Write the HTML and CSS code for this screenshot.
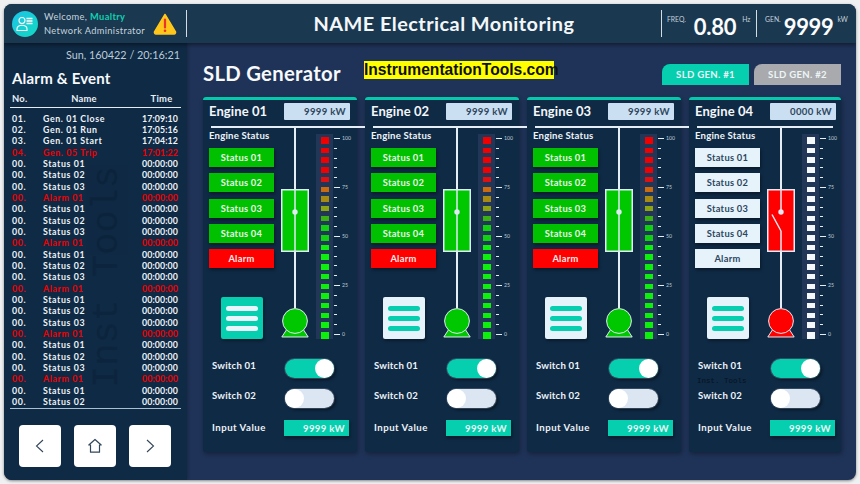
FILE: index.html
```html
<!DOCTYPE html>
<html lang="en">
<head>
<meta charset="utf-8">
<title>NAME Electrical Monitoring</title>
<link rel="stylesheet" href="styles.css">
</head>
<body>
<div class="app">
  <header class="top">
    <div class="user">
      <div class="avatar">
        <svg viewBox="0 0 26 26" width="26" height="26"><circle cx="10" cy="9.5" r="3" fill="none" stroke="#fff" stroke-width="1.1"/><path d="M5 19.5v-1.8c0-2.2 2-3.4 5-3.4s5 1.2 5 3.4v1.8z" fill="none" stroke="#fff" stroke-width="1.1"/><path d="M14.5 7.5h6M14.5 10h6M14.5 12.5h6" stroke="#fff" stroke-width="1.3"/></svg>
      </div>
      <div class="user-text">
        <div>Welcome, <b class="user-name">Mualtry</b></div>
        <div>Network Administrator</div>
      </div>
    </div>
    <svg class="warn" viewBox="0 0 24 22" width="24" height="22"><path d="M12 1.5 1.5 19a1.6 1.6 0 0 0 1.4 2h18.2a1.6 1.6 0 0 0 1.4-2z" fill="#ffc61b" stroke="#ffc61b" stroke-width="1.5" stroke-linejoin="round"/><path d="M12 6.5v8" stroke="#e8342a" stroke-width="2.2" stroke-linecap="round"/><circle cx="12" cy="17.7" r="1.3" fill="#e8342a"/></svg>
    <h1 class="title">NAME Electrical Monitoring</h1>
    <div class="meter meter-freq">
      <span class="m-label">FREQ.</span><span class="m-value">0.80</span><span class="m-unit">Hz</span>
    </div>
    <div class="meter meter-gen">
      <span class="m-label">GEN.</span><span class="m-value">9999</span><span class="m-unit">kW</span>
    </div>
  </header>

  <div class="content">
    <aside class="side">
      <div class="stamp">Sun, 160422 / 20:16:21</div>
      <h2 class="side-title">Alarm &amp; Event</h2>
      <div class="ev-head"><span>No.</span><span>Name</span><span>Time</span></div>
      <div class="ev-list">
        <div class="ev"><span>01.</span><span>Gen. 01 Close</span><span>17:09:10</span></div>
        <div class="ev"><span>02.</span><span>Gen. 01 Run</span><span>17:05:16</span></div>
        <div class="ev"><span>03.</span><span>Gen. 01 Start</span><span>17:04:12</span></div>
        <div class="ev ev-red"><span>04.</span><span>Gen. 05 Trip</span><span>17:01:22</span></div>
        <div class="ev"><span>00.</span><span>Status 01</span><span>00:00:00</span></div>
        <div class="ev"><span>00.</span><span>Status 02</span><span>00:00:00</span></div>
        <div class="ev"><span>00.</span><span>Status 03</span><span>00:00:00</span></div>
        <div class="ev ev-red"><span>00.</span><span>Alarm 01</span><span>00:00:00</span></div>
        <div class="ev"><span>00.</span><span>Status 01</span><span>00:00:00</span></div>
        <div class="ev"><span>00.</span><span>Status 02</span><span>00:00:00</span></div>
        <div class="ev"><span>00.</span><span>Status 03</span><span>00:00:00</span></div>
        <div class="ev ev-red"><span>00.</span><span>Alarm 01</span><span>00:00:00</span></div>
        <div class="ev"><span>00.</span><span>Status 01</span><span>00:00:00</span></div>
        <div class="ev"><span>00.</span><span>Status 02</span><span>00:00:00</span></div>
        <div class="ev"><span>00.</span><span>Status 03</span><span>00:00:00</span></div>
        <div class="ev ev-red"><span>00.</span><span>Alarm 01</span><span>00:00:00</span></div>
        <div class="ev"><span>00.</span><span>Status 01</span><span>00:00:00</span></div>
        <div class="ev"><span>00.</span><span>Status 02</span><span>00:00:00</span></div>
        <div class="ev"><span>00.</span><span>Status 03</span><span>00:00:00</span></div>
        <div class="ev ev-red"><span>00.</span><span>Alarm 01</span><span>00:00:00</span></div>
        <div class="ev"><span>00.</span><span>Status 01</span><span>00:00:00</span></div>
        <div class="ev"><span>00.</span><span>Status 02</span><span>00:00:00</span></div>
        <div class="ev"><span>00.</span><span>Status 03</span><span>00:00:00</span></div>
        <div class="ev ev-red"><span>00.</span><span>Alarm 01</span><span>00:00:00</span></div>
        <div class="ev"><span>00.</span><span>Status 01</span><span>00:00:00</span></div>
        <div class="ev"><span>00.</span><span>Status 02</span><span>00:00:00</span></div>
      </div>
      <div class="nav">
        <button class="nav-btn" aria-label="Back"><svg viewBox="0 0 14 14" width="14" height="14"><path d="M10 1 3.5 7l6.5 6" fill="none" stroke="#33475b" stroke-width="1.1"/></svg></button>
        <button class="nav-btn" aria-label="Home"><svg viewBox="0 0 16 16" width="16" height="16"><path d="M8 1.5 1.8 7l1.7 0v7.2h9V7l1.7 0z" fill="none" stroke="#33475b" stroke-width="1.2" stroke-linejoin="round"/></svg></button>
        <button class="nav-btn" aria-label="Next"><svg viewBox="0 0 14 14" width="14" height="14"><path d="M4 1l6.5 6L4 13" fill="none" stroke="#33475b" stroke-width="1.1"/></svg></button>
      </div>
      <div class="ghost">Inst Tools</div>
    </aside>

    <main class="main">
      <div class="main-head">
        <h2 class="main-title">SLD Generator</h2>
        <div class="brand">InstrumentationTools.com</div>
        <div class="tabs">
          <div class="tab tab-on">SLD GEN. #1</div>
          <div class="tab tab-off">SLD GEN. #2</div>
        </div>
      </div>

      <div class="engines">
        <section class="card">
          <div class="card-head"><span class="card-name">Engine 01</span><span class="card-val">9999 kW</span></div>
          <div class="bus"></div>
          <div class="card-mid">
            <div class="stat-col">
              <div class="stat-label">Engine Status</div>
              <div class="st st-g">Status 01</div>
              <div class="st st-g">Status 02</div>
              <div class="st st-g">Status 03</div>
              <div class="st st-g">Status 04</div>
              <div class="st st-r">Alarm</div>
              <div class="menu menu-teal"><i></i><i></i><i></i></div>
            </div>
            <div class="sld">
              <div class="wire"></div>
              <svg class="sw" viewBox="0 0 28 63" width="28" height="63"><rect x=".75" y=".75" width="26.5" height="61.5" fill="#00c800" stroke="#dfeaf5" stroke-width="1.5"/><path d="M14 0v63" stroke="#dfeaf5" stroke-width="1.5"/><circle cx="14" cy="23" r="2.7" fill="#dfeaf5"/></svg>
              <div class="wire wire-fill"></div>
              <svg class="pump" viewBox="0 0 28 30" width="28" height="30"><path d="M6 21 .8 29h26.4L22 21z" fill="#00c800" stroke="#dfeaf5"/><circle cx="14" cy="13" r="12.4" fill="#00c800" stroke="#dfeaf5" stroke-width="1"/></svg>
            </div>
            <div class="gauge">
              <div class="seg-col"><i class="s-big s-r"></i><i class="s-r"></i><i class="s-r"></i><i class="s-r"></i><i class="s-r2"></i><i class="s-o1"></i><i class="s-o2"></i><i class="s-o3"></i><i class="s-g0"></i><i class="s-g1"></i><i class="s-g1"></i><i class="s-g"></i><i class="s-g"></i><i class="s-g"></i><i class="s-g"></i><i class="s-g"></i><i class="s-g"></i><i class="s-g"></i><i class="s-g"></i><i class="s-g"></i><i class="s-big s-g"></i></div>
              <div class="scale"><span>100</span><span>75</span><span>50</span><span>25</span><span>0</span></div>
            </div>
          </div>
          <div class="row row-1"><span class="row-label">Switch 01</span><span class="tog tog-on"><i></i></span></div>
          <div class="row row-2"><span class="row-label">Switch 02</span><span class="tog"><i></i></span></div>
          <div class="row row-3"><span class="row-label">Input Value</span><span class="input">9999 kW</span></div>
        </section>

        <section class="card">
          <div class="card-head"><span class="card-name">Engine 02</span><span class="card-val">9999 kW</span></div>
          <div class="bus"></div>
          <div class="card-mid">
            <div class="stat-col">
              <div class="stat-label">Engine Status</div>
              <div class="st st-g">Status 01</div>
              <div class="st st-g">Status 02</div>
              <div class="st st-g">Status 03</div>
              <div class="st st-g">Status 04</div>
              <div class="st st-r">Alarm</div>
              <div class="menu"><i></i><i></i><i></i></div>
            </div>
            <div class="sld">
              <div class="wire"></div>
              <svg class="sw" viewBox="0 0 28 63" width="28" height="63"><rect x=".75" y=".75" width="26.5" height="61.5" fill="#00c800" stroke="#dfeaf5" stroke-width="1.5"/><path d="M14 0v63" stroke="#dfeaf5" stroke-width="1.5"/><circle cx="14" cy="23" r="2.7" fill="#dfeaf5"/></svg>
              <div class="wire wire-fill"></div>
              <svg class="pump" viewBox="0 0 28 30" width="28" height="30"><path d="M6 21 .8 29h26.4L22 21z" fill="#00c800" stroke="#dfeaf5"/><circle cx="14" cy="13" r="12.4" fill="#00c800" stroke="#dfeaf5" stroke-width="1"/></svg>
            </div>
            <div class="gauge">
              <div class="seg-col"><i class="s-big s-r"></i><i class="s-r"></i><i class="s-r"></i><i class="s-r"></i><i class="s-r2"></i><i class="s-o1"></i><i class="s-o2"></i><i class="s-o3"></i><i class="s-g0"></i><i class="s-g1"></i><i class="s-g1"></i><i class="s-g"></i><i class="s-g"></i><i class="s-g"></i><i class="s-g"></i><i class="s-g"></i><i class="s-g"></i><i class="s-g"></i><i class="s-g"></i><i class="s-g"></i><i class="s-big s-g"></i></div>
              <div class="scale"><span>100</span><span>75</span><span>50</span><span>25</span><span>0</span></div>
            </div>
          </div>
          <div class="row row-1"><span class="row-label">Switch 01</span><span class="tog tog-on"><i></i></span></div>
          <div class="row row-2"><span class="row-label">Switch 02</span><span class="tog"><i></i></span></div>
          <div class="row row-3"><span class="row-label">Input Value</span><span class="input">9999 kW</span></div>
        </section>

        <section class="card">
          <div class="card-head"><span class="card-name">Engine 03</span><span class="card-val">9999 kW</span></div>
          <div class="bus"></div>
          <div class="card-mid">
            <div class="stat-col">
              <div class="stat-label">Engine Status</div>
              <div class="st st-g">Status 01</div>
              <div class="st st-g">Status 02</div>
              <div class="st st-g">Status 03</div>
              <div class="st st-g">Status 04</div>
              <div class="st st-r">Alarm</div>
              <div class="menu"><i></i><i></i><i></i></div>
            </div>
            <div class="sld">
              <div class="wire"></div>
              <svg class="sw" viewBox="0 0 28 63" width="28" height="63"><rect x=".75" y=".75" width="26.5" height="61.5" fill="#00c800" stroke="#dfeaf5" stroke-width="1.5"/><path d="M14 0v63" stroke="#dfeaf5" stroke-width="1.5"/><circle cx="14" cy="23" r="2.7" fill="#dfeaf5"/></svg>
              <div class="wire wire-fill"></div>
              <svg class="pump" viewBox="0 0 28 30" width="28" height="30"><path d="M6 21 .8 29h26.4L22 21z" fill="#00c800" stroke="#dfeaf5"/><circle cx="14" cy="13" r="12.4" fill="#00c800" stroke="#dfeaf5" stroke-width="1"/></svg>
            </div>
            <div class="gauge">
              <div class="seg-col"><i class="s-big s-r"></i><i class="s-r"></i><i class="s-r"></i><i class="s-r"></i><i class="s-r2"></i><i class="s-o1"></i><i class="s-o2"></i><i class="s-o3"></i><i class="s-g0"></i><i class="s-g1"></i><i class="s-g1"></i><i class="s-g"></i><i class="s-g"></i><i class="s-g"></i><i class="s-g"></i><i class="s-g"></i><i class="s-g"></i><i class="s-g"></i><i class="s-g"></i><i class="s-g"></i><i class="s-big s-g"></i></div>
              <div class="scale"><span>100</span><span>75</span><span>50</span><span>25</span><span>0</span></div>
            </div>
          </div>
          <div class="row row-1"><span class="row-label">Switch 01</span><span class="tog tog-on"><i></i></span></div>
          <div class="row row-2"><span class="row-label">Switch 02</span><span class="tog"><i></i></span></div>
          <div class="row row-3"><span class="row-label">Input Value</span><span class="input">9999 kW</span></div>
        </section>

        <section class="card card-last">
          <div class="card-head"><span class="card-name">Engine 04</span><span class="card-val">0000 kW</span></div>
          <div class="bus"></div>
          <div class="card-mid">
            <div class="stat-col">
              <div class="stat-label">Engine Status</div>
              <div class="st st-w">Status 01</div>
              <div class="st st-w">Status 02</div>
              <div class="st st-w">Status 03</div>
              <div class="st st-w">Status 04</div>
              <div class="st st-w">Alarm</div>
              <div class="menu"><i></i><i></i><i></i></div>
            </div>
            <div class="sld">
              <div class="wire"></div>
              <svg class="sw" viewBox="0 0 28 63" width="28" height="63"><rect x=".75" y=".75" width="26.5" height="61.5" fill="#ff0000" stroke="#dfeaf5" stroke-width="1.5"/><path d="M14 0v23M5 25.5 14 42M14 42v21" fill="none" stroke="#dfeaf5" stroke-width="1.5"/><circle cx="14" cy="23" r="2.7" fill="#dfeaf5"/></svg>
              <div class="wire wire-fill"></div>
              <svg class="pump" viewBox="0 0 28 30" width="28" height="30"><path d="M6 21 .8 29h26.4L22 21z" fill="#ff0000" stroke="#dfeaf5"/><circle cx="14" cy="13" r="12.4" fill="#ff0000" stroke="#dfeaf5" stroke-width="1"/></svg>
            </div>
            <div class="gauge">
              <div class="seg-col seg-white"><i class="s-big"></i><i></i><i></i><i></i><i></i><i></i><i></i><i></i><i></i><i></i><i></i><i></i><i></i><i></i><i></i><i></i><i></i><i></i><i></i><i></i><i class="s-big"></i></div>
              <div class="scale"><span>100</span><span>75</span><span>50</span><span>25</span><span>0</span></div>
            </div>
          </div>
          <div class="row row-1"><span class="row-label">Switch 01</span><span class="tog tog-on"><i></i></span></div>
          <div class="row row-2"><span class="row-label">Switch 02</span><span class="tog"><i></i></span></div>
          <div class="row row-3"><span class="row-label">Input Value</span><span class="input">9999 kW</span></div>
          <div class="mini-mark">Inst. Tools</div>
        </section>
      </div>
    </main>
  </div>
</div>
</body>
</html>
```

FILE: styles.css
```css
* { box-sizing: border-box; }
html, body { margin: 0; height: 100%; }
body { background: #eef0f2; font-family: Lato, "Open Sans", sans-serif; color: #fff; overflow: hidden; }
h1, h2 { margin: 0; }

.app {
  margin: 4px; width: 852px; height: 476px; border-radius: 8px; overflow: hidden;
  background: #1f3358; display: flex; flex-direction: column;
  box-shadow: 0 1px 3px rgba(0,0,0,.45);
}

/* header */
.top {
  height: 39px; flex: none; background: #1a3850; display: flex; align-items: center;
  box-shadow: 0 2px 4px rgba(0,0,0,.45); position: relative; z-index: 2;
}
.user { display: flex; align-items: center; margin-left: 8px; width: 141px; }
.avatar {
  width: 26px; height: 26px; border-radius: 50%; flex: none;
  background: linear-gradient(135deg, #1dc4e8, #12d8c0);
}
.avatar svg { display: block; }
.user-text { margin-left: 6px; font-size: 9.3px; line-height: 13.5px; color: #c6d3dd; letter-spacing: .35px; white-space: nowrap; }
.user-name { color: #10d0b0; }
.warn { flex: none; display: block; }
.title {
  flex: none; width: 476px; height: 27px; margin-left: 9px; padding-left: 40px;
  border-left: 1px solid #d5dde3; border-right: 1px solid #d5dde3;
  font-size: 19.9px; line-height: 27px; font-weight: 700; text-align: center; letter-spacing: .45px; color: #f4f7f9;
}
.meter { display: flex; height: 27px; flex: none; }
.meter-freq { width: 95px; border-right: 1px solid #d5dde3; padding-left: 5px; }
.meter-gen { width: 97px; padding-left: 8px; }
.m-label, .m-unit { font-size: 6.8px; color: #c6d3dd; line-height: 10px; padding-top: 4px; }
.m-value { font-weight: 700; font-size: 22px; line-height: 33px; color: #fafcfd; letter-spacing: -.3px; }
.meter-freq .m-value { margin-left: 8px; margin-right: 6px; }
.meter-gen .m-value { margin-left: 3px; margin-right: 4px; }

/* layout */
.content { flex: 1; display: flex; min-height: 0; }

/* sidebar */
.side { width: 183px; flex: none; background: #0f2a45; position: relative; padding: 4px 7px 0 6px; box-shadow: 1px 0 3px rgba(0,0,0,.25); }
.stamp { text-align: right; font-size: 10.8px; line-height: 15px; color: #bccad6; padding-right: 0; }
.side-title { font-size: 15px; line-height: 18px; margin: 7px 0 0 2px; font-weight: 700; letter-spacing: .2px; color: #f6f9fb; }
.ev-head {
  display: grid; grid-template-columns: 46px 56px 1fr; margin-top: 5px; height: 16px; width: 171px; border-bottom: 1.5px solid #e5edf3;
  font-size: 9.4px; font-weight: 700; line-height: 13px; letter-spacing: .25px; color: #e9eff4;
}
.ev-head span { padding-left: 2px; }
.ev-head span:nth-child(2) { padding: 0; text-align: center; }
.ev-head span:nth-child(3) { padding: 0 0 0 30px; text-align: center; }
.ev-list { margin-top: 4.7px; height: 296px; width: 171px; border-bottom: 1px solid #a9c0d3; }
.ev { display: grid; grid-template-columns: 31px 1fr auto; height: 11.33px; padding: 0 3px 0 2px; font-size: 8.8px; line-height: 11.33px; font-weight: 700; letter-spacing: .6px; color: #eef3f7; }
.ev span:last-child { letter-spacing: .1px; }
.ev-red { color: #f00000; }
.nav { display: flex; justify-content: center; gap: 13px; margin-top: 16px; }
.nav-btn { width: 42px; height: 42px; border: 0; padding: 0; border-radius: 4px; background: #fff; display: flex; align-items: center; justify-content: center; }
.ghost {
  position: absolute; left: 103px; top: 234px; transform: translate(-50%, -50%) rotate(-90deg);
  font-family: "Liberation Mono", monospace; font-size: 37px; color: #0b2138; white-space: nowrap; opacity: .6;
}

/* main */
.main { flex: 1; min-width: 0; padding-left: 16px; padding-right: 15px; }
.main-head { display: flex; height: 54px; align-items: flex-start; }
.main-title { font-size: 20.3px; line-height: 26px; margin-top: 17px; font-weight: 700; width: 161px; letter-spacing: .3px; color: #f7f9fb; white-space: nowrap; }
.brand {
  margin-top: 18px; height: 18px; width: 190px; background: #ffff00; color: #101010;
  font-family: "Liberation Sans", Arial, sans-serif; font-weight: 700; font-size: 15.6px; line-height: 18px; text-align: center; white-space: nowrap;
}
.tabs { margin-left: auto; display: flex; gap: 5px; margin-top: 21px; }
.tab { width: 87px; height: 21px; border-radius: 8px 0 0 0; font-size: 9.6px; font-weight: 700; line-height: 21px; text-align: center; letter-spacing: .3px; color: #edf5f7; }
.tab-on { background: #05cfae; }
.tab-off { background: #a9aaad; }

.engines { display: grid; grid-template-columns: 154px 154px 154px 152px; gap: 8px; }
.card {
  height: 355px; background: #0f2a45; border-top: 3px solid #04c9ad; border-radius: 3px;
  box-shadow: 1px 2px 4px rgba(0,0,0,.35); position: relative;
}
.card-head { display: flex; align-items: flex-start; height: 26px; padding: 3px 0 0 6px; }
.card-name { width: 75px; flex: none; font-size: 13px; line-height: 17px; font-weight: 700; letter-spacing: .1px; color: #f3f7fa; }
.card-val { width: 66px; height: 17px; background: #cbdff2; border-radius: 1px; text-align: right; padding-right: 4px; font-size: 9.6px; line-height: 17px; font-weight: 700; letter-spacing: .35px; color: #2e4760; }
.bus { height: 2px; margin: 0 -8px 0 8px; background: #e6eef5; position: relative; z-index: 1; }
.card-last .bus { margin-right: 8px; }

.card-mid { display: flex; height: 211px; padding-left: 6px; }
.stat-col { width: 72px; flex: none; }
.stat-label { font-size: 9.6px; font-weight: 700; line-height: 14px; padding-top: 1px; height: 20px; letter-spacing: .2px; color: #eef3f7; }
.st {
  width: 65px; height: 19px; margin-bottom: 6.3px; text-align: center; font-size: 9.3px; line-height: 19px; font-weight: 700; letter-spacing: .3px;
  box-shadow: 1px 2px 3px rgba(0,0,0,.4);
}
.st-g { background: #00c000; color: #e9f6e9; }
.st-r { background: #ff0000; color: #fde9e9; }
.st-w { background: #e7f3fb; color: #2c4660; }
.menu {
  width: 42px; height: 42px; margin: 29px 0 0 12px; border-radius: 2px; background: #e7f3fb; padding: 9px 5px 0;
  box-shadow: 1px 2px 3px rgba(0,0,0,.35);
}
.menu i { display: block; height: 5px; border-radius: 3px; background: #05cfae; margin: 0 0 4.8px; }
.menu-teal { background: #05cfae; }
.menu-teal i { background: #e9f5fa; }

.sld { width: 28px; flex: none; display: flex; flex-direction: column; align-items: center; }
.wire { width: 2px; height: 61px; background: #e6eef5; flex: none; }
.wire-fill { flex: 1; height: auto; }
.sw, .pump { display: block; flex: none; }
.pump { margin-bottom: 1px; }

.gauge { display: flex; margin-left: 7px; padding-top: 6px; align-items: flex-start; }
.seg-col { width: 17px; height: 205px; background: #223658; display: flex; flex-direction: column; align-items: center; padding-top: 4px; }
.seg-col i { display: block; width: 8px; height: 5.6px; margin-bottom: 4.2px; }
.seg-col i.s-big { height: 7.5px; margin-bottom: 3.3px; margin-top: -1px; }
.seg-col i.s-big:last-child { margin-top: -.4px; margin-bottom: 0; }
.s-r { background: #f00000; }
.s-r2 { background: #e01010; }
.s-o1 { background: #cc6a10; }
.s-o2 { background: #a88a12; }
.s-o3 { background: #8ea312; }
.s-g0 { background: #3bb012; }
.s-g1 { background: #10d010; }
.s-g { background: #0cf00c; }
.seg-white i { background: #f5f9fc; }
.scale {
  width: 20px; height: 205px; margin-left: 1px; padding: 3px 0 0 0; display: flex; flex-direction: column;
  background-image: repeating-linear-gradient(to bottom, #e6eef5 0 1px, transparent 1px 9.8px);
  background-size: 3px 100%; background-repeat: no-repeat; background-position: 0 3.5px;
  font-size: 5.2px; color: #bfccd8;
}
.scale span { height: 49px; line-height: 2px; padding-left: 8px; position: relative; flex: none; }
.scale span::before { content: ""; position: absolute; left: 0; top: .5px; width: 6px; height: 1.5px; background: #e6eef5; }

.row { display: flex; align-items: center; padding-left: 9px; }
.row-label { width: 73px; flex: none; padding-bottom: 6px; font-size: 9.6px; font-weight: 700; letter-spacing: .2px; color: #eef3f7; }
.row-1 { margin-top: 20px; height: 19px; }
.row-2 { margin-top: 11px; height: 19px; }
.row-3 { margin-top: 12px; height: 16px; }
.row-3 .row-label { width: 72px; padding-bottom: 1px; letter-spacing: .5px; }
.tog {
  width: 49px; height: 19px; border-radius: 10px; background: #dbe6f2; display: block; position: relative;
  box-shadow: 0 0 0 1px rgba(90,110,130,.5), 2px 2px 3px rgba(0,0,0,.5);
}
.tog i { position: absolute; left: 0; top: 0; width: 19px; height: 19px; border-radius: 50%; background: #fff; }
.tog-on { background: #05cfae; }
.tog-on i { left: 30px; }
.input { width: 65px; height: 16px; background: #05cfae; text-align: right; padding-right: 4px; font-size: 9.6px; line-height: 17px; font-weight: 700; letter-spacing: .35px; color: #e6f9f6; box-shadow: 1px 2px 3px rgba(0,0,0,.4); }
.mini-mark {
  position: absolute; left: 8px; top: 277px; font-family: "Liberation Mono", monospace; font-size: 7.5px; color: #05121f; white-space: nowrap;
}
```
